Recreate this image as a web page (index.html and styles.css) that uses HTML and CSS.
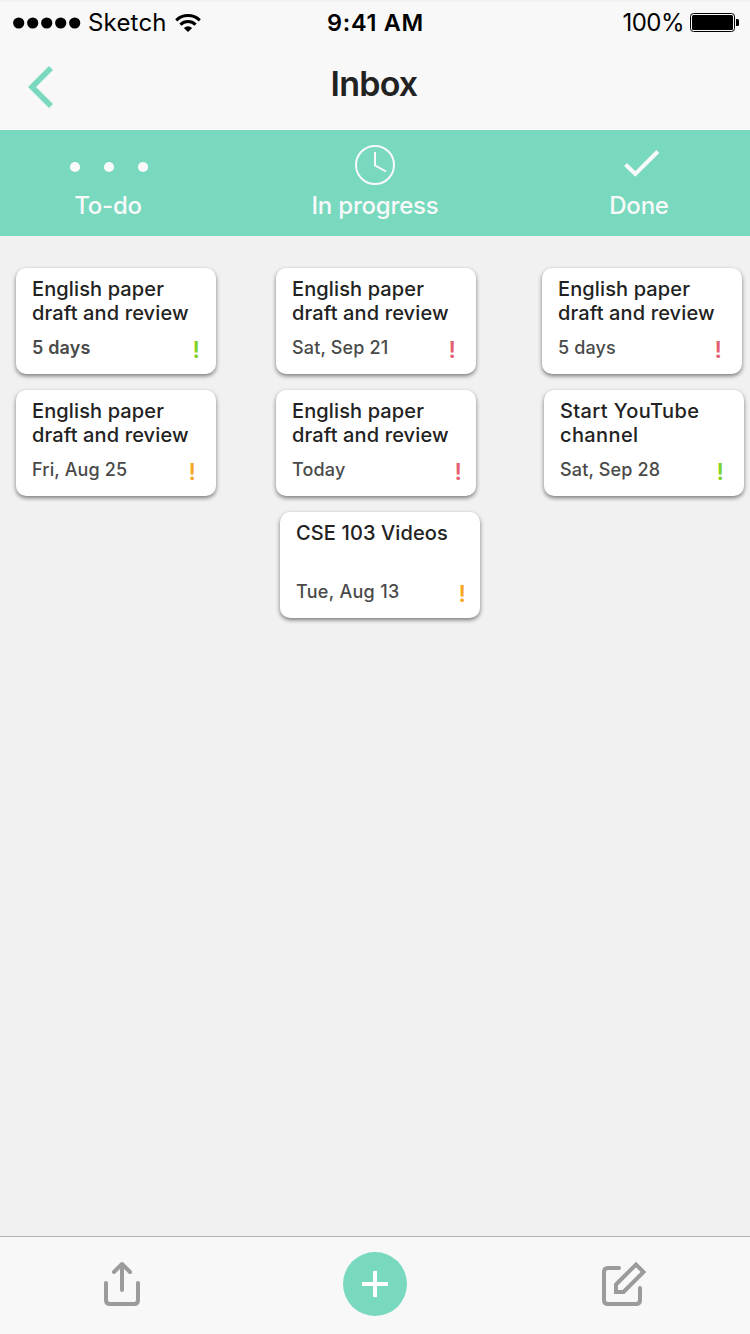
FILE: index.html
```html
<!DOCTYPE html>
<html lang="en">
<head>
<meta charset="utf-8">
<title>Inbox</title>
<link rel="stylesheet" href="styles.css">
</head>
<body>
<div class="screen">
  <header class="header">
    <div class="status">
      <div class="status-left">
        <svg class="signal" width="68" height="12" viewBox="0 0 68 12"><circle cx="5.7" cy="6" r="5.6"/><circle cx="19.7" cy="6" r="5.6"/><circle cx="33.7" cy="6" r="5.6"/><circle cx="47.7" cy="6" r="5.6"/><circle cx="61.7" cy="6" r="5.6"/></svg>
        <span class="carrier">Sketch</span>
        <svg class="wifi" width="26" height="18" viewBox="0 0 26 18"><g fill="none" stroke="#000" stroke-width="3"><path d="M1.2 6.3Q6.2 1.6 13 1.6T24.8 6.3"/><path d="M5.4 10.6Q8.6 7.6 13 7.6T20.6 10.6"/></g><path d="M8.8 14Q13 10.4 17.2 14L13 18Z"/></svg>
      </div>
      <span class="clock">9:41 AM</span>
      <div class="status-right">
        <span class="percent">100%</span>
        <svg class="battery" width="49" height="19" viewBox="0 0 49 19"><rect x=".5" y=".5" width="44" height="18" rx="3" fill="none" stroke="#000"/><rect x="2" y="2" width="41" height="15" rx="1.5"/><path d="M46 6h1.5q1.5 0 1.5 1.5v4q0 1.500-1.500 1.500H46z"/></svg>
      </div>
    </div>
    <nav class="nav">
      <svg class="back" width="26" height="42" viewBox="0 0 26 42"><path d="M23 2L4 21L23 40" fill="none" stroke="#78d9bf" stroke-width="5.600"/></svg>
      <h1 class="title">Inbox</h1>
    </nav>
  </header>

  <div class="tabs">
    <div class="tab tab-todo">
      <svg class="tab-icon" width="80" height="40" viewBox="0 0 80 40"><g fill="#f9f9f9"><circle cx="7" cy="22" r="5.100"/><circle cx="41" cy="22" r="5.100"/><circle cx="75" cy="22" r="5.100"/></g></svg>
      <span class="tab-label">To-do</span>
    </div>
    <div class="tab tab-progress">
      <svg class="tab-icon" width="40" height="40" viewBox="0 0 40 40"><g fill="none" stroke="#f9f9f9"><circle cx="20" cy="20" r="19" stroke-width="2"/><path d="M20 7V20.300L31 26.500" stroke-width="2"/></g></svg>
      <span class="tab-label">In progress</span>
    </div>
    <div class="tab tab-done">
      <svg class="tab-icon" width="40" height="40" viewBox="0 0 40 40"><path d="M6.500 19.500L16.300 29L38.800 6.500" fill="none" stroke="#f9f9f9" stroke-width="4"/></svg>
      <span class="tab-label">Done</span>
    </div>
  </div>

  <main class="board">
    <section class="column">
      <article class="card"><h2 class="card-title">English paper<br>draft and review</h2><div class="card-foot"><span class="date date-strong">5 days</span><span class="mark low">!</span></div></article>
      <article class="card"><h2 class="card-title">English paper<br>draft and review</h2><div class="card-foot inset-4"><span class="date">Fri, Aug 25</span><span class="mark medium">!</span></div></article>
    </section>
    <section class="column">
      <article class="card"><h2 class="card-title">English paper<br>draft and review</h2><div class="card-foot inset-4"><span class="date">Sat, Sep 21</span><span class="mark high">!</span></div></article>
      <article class="card"><h2 class="card-title">English paper<br>draft and review</h2><div class="card-foot outset-2"><span class="date">Today</span><span class="mark high">!</span></div></article>
      <article class="card shift-4"><h2 class="card-title">CSE 103 Videos</h2><div class="card-foot outset-2"><span class="date date-wide">Tue, Aug 13</span><span class="mark medium">!</span></div></article>
    </section>
    <section class="column">
      <article class="card"><h2 class="card-title">English paper<br>draft and review</h2><div class="card-foot inset-4"><span class="date">5 days</span><span class="mark high">!</span></div></article>
      <article class="card shift-2"><h2 class="card-title title-wide">Start YouTube<br>channel</h2><div class="card-foot inset-4"><span class="date">Sat, Sep 28</span><span class="mark low">!</span></div></article>
    </section>
  </main>

  <footer class="toolbar">
    <svg class="share" width="36" height="46" viewBox="0 0 36 46"><g fill="none" stroke="#9b9b9b" stroke-width="4" stroke-linecap="round" stroke-linejoin="round"><path d="M18 30V4M10 12L18 4L26 12"/><path d="M2 23V40Q2 44 6 44H30Q34 44 34 40V23"/></g></svg>
    <div class="add"><svg width="26" height="26" viewBox="0 0 26 26"><path d="M13 0V26M0 13H26" stroke="#fff" stroke-width="4"/></svg></div>
    <svg class="compose" width="46" height="46" viewBox="0 0 46 46"><g fill="none" stroke="#9b9b9b" stroke-width="4" stroke-linecap="round"><path d="M17 8H6Q2 8 2 12V40Q2 44 6 44H34Q38 44 38 40V28"/><path d="M14 24.500L34 4.500L41.500 12L21.500 32H14Z"/></g></svg>
  </footer>
</div>
</body>
</html>
```
FILE: styles.css
```css
* { box-sizing: border-box; margin: 0; padding: 0; }
body { font-family: Inter, "Liberation Sans", sans-serif; background: #f1f1f1; }
svg { display: block; flex: none; }
.screen { width: 750px; height: 1334px; display: flex; flex-direction: column; background: #f1f1f1; overflow: hidden; }
.header { height: 130px; background: #f8f8f8; border-top: 2px solid #f1f1f1; }
.status { height: 42px; display: grid; grid-template-columns: 1fr auto 1fr; align-items: center; padding: 0 11px 0 13px; color: #000; font-size: 24px; line-height: 30px; }
.status-left, .status-right { display: flex; align-items: center; }
.status-right { justify-content: flex-end; }
.signal, .wifi, .battery { margin-bottom: 1px; }
.carrier { margin-left: 7px; letter-spacing: 0.2px; }
.wifi { margin-left: 8px; }
.clock { margin-right: 1px; font-weight: 600; font-size: 23.500px; letter-spacing: 0.7px; }
.percent { letter-spacing: -0.500px; }
.battery { margin-left: 6px; }
.nav { height: 86px; display: grid; grid-template-columns: 1fr auto 1fr; padding-left: 28px; padding-right: 30px; }
.back { margin-top: 22px; }
.title { margin-top: 19px; font-size: 34px; line-height: 42px; font-weight: 600; letter-spacing: -0.8px; color: #222; }
.tabs { height: 106px; display: flex; background: #78d9bf; color: #f9f9f9; }
.tab { display: flex; flex-direction: column; align-items: center; padding-top: 15px; }
.tab-todo { width: 216px; }
.tab-progress { width: 318px; }
.tab-done { width: 210px; }
.tab-label { margin-top: 6px; font-size: 24px; line-height: 30px; font-weight: 500; letter-spacing: -0.200px; }
.board { flex: 1; display: grid; grid-template-columns: 260px 266px 200px; align-content: start; padding: 32px 0 0 16px; }
.column { display: flex; flex-direction: column; gap: 16px; }
.card { width: 200px; height: 106px; padding: 9px 16px 0 16px; border-radius: 10px; background: #fff; box-shadow: 0 2px 4px rgba(0, 0, 0, 0.5); display: flex; flex-direction: column; }
.shift-2 { margin-left: 2px; }
.shift-4 { margin-left: 4px; }
.card-title { height: 48px; font-size: 20px; line-height: 24px; font-weight: 500; letter-spacing: 0.120px; color: #222; white-space: nowrap; }
.title-wide { letter-spacing: 0.380px; }
.card-foot { margin-top: 12px; display: flex; justify-content: space-between; color: #4a4a4a; }
.inset-4 { padding-right: 4px; }
.outset-2 { margin-right: -2px; }
.date { font-size: 18px; line-height: 22px; font-weight: 500; letter-spacing: 0.150px; }
.date-wide { letter-spacing: 0.300px; }
.date-strong { font-weight: 600; }
.mark { padding-top: 1px; font-size: 23px; line-height: 24px; font-weight: 600; }
.low { color: #7ed321; }
.medium { color: #f5a623; }
.high { color: #e65f73; }
.toolbar { height: 98px; flex: none; display: grid; grid-template-columns: 1fr auto 1fr; align-items: start; border-top: 1px solid #b2b2b2; background: #f8f8f8; padding: 15px 102px 0 104px; }
.share, .compose { margin-top: 8px; }
.compose { justify-self: end; }
.add { width: 64px; height: 64px; margin: 0 1px 0 -1px; border-radius: 50%; background: #78d9bf; display: grid; place-items: center; }
```
